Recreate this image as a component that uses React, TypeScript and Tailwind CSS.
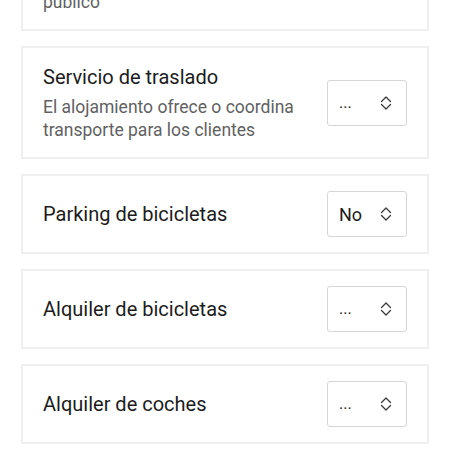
import React from 'react';

type Item = {
    title?: string;
    description?: string;
    value?: string;
};

const ITEMS: Item[] = [
    {
        title: 'Servicio de traslado',
        description: 'El alojamiento ofrece o coordina transporte para los clientes',
        value: '...',
    },
    { title: 'Parking de bicicletas', value: 'No' },
    { title: 'Alquiler de bicicletas', value: '...' },
    { title: 'Alquiler de coches', value: '...' },
];

function UpDownIcon() {
    return (
        <svg width="12" height="16" viewBox="0 0 12 16" fill="none" stroke="#3a3a3a" strokeWidth="1.3" strokeLinecap="round" strokeLinejoin="round">
            <path d="M1.5 6.5 6 2l4.5 4.5" />
            <path d="M1.5 9.5 6 14l4.5-4.5" />
        </svg>
    );
}

function SelectBox({ value }: { value: string }) {
    return (
        <div className="flex h-[46px] w-[80px] flex-shrink-0 items-center justify-between rounded-[3px] border border-[#d6d6d6] bg-white pl-[11px] pr-[14px]">
            <span className={value === 'No' ? 'text-[18px] text-[#1c1c1c]' : 'text-[16px] text-[#1c1c1c]'}>{value}</span>
            <UpDownIcon />
        </div>
    );
}

function Card({ item }: { item: Item }) {
    return (
        <div className="flex items-center justify-between gap-4 border-2 border-[#efefef] bg-white px-[20px] py-[15px]">
            <div className="flex flex-col">
                <div className="text-[20px] leading-[28px] text-[#1c1c1c]">{item.title}</div>
                {item.description && (
                    <div className="mt-[5px] max-w-[264px] text-[17.5px] leading-[23px] text-[#616161]">
                        {item.description}
                    </div>
                )}
            </div>
            <SelectBox value={item.value ?? '...'} />
        </div>
    );
}

export default function App() {
    return (
        <div
            className="h-[450px] w-[450px] overflow-hidden bg-white"
            style={{ fontFamily: 'Roboto, "Noto Sans", sans-serif' }}
        >
            <div className="-mt-[32px] flex flex-col gap-[15px] pl-[21px] pr-[21px]">
                <div className="border-2 border-t-0 border-[#efefef] bg-white px-[20px] pb-[15px] pt-[0px]">
                    <div className="text-[17.5px] leading-[23px] text-[#616161]">transporte</div>
                    <div className="text-[17.5px] leading-[23px] text-[#616161]">público</div>
                </div>
                {ITEMS.map((item) => (
                    <Card key={item.title} item={item} />
                ))}
            </div>
        </div>
    );
}
